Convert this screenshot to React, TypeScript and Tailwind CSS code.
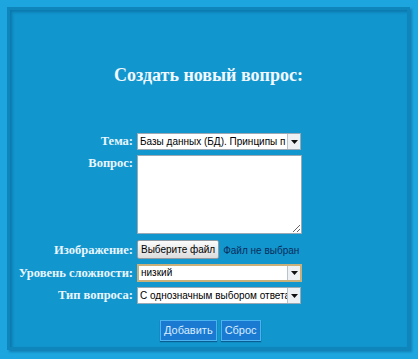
import React from "react"

const Arrow = () => (
  <div className="flex h-full w-[13px] items-center justify-center border-l border-[#b8c4cc] bg-[#eef1f4]">
    <svg width="7" height="4" viewBox="0 0 7 4">
      <path d="M0 0h7L3.5 4z" fill="#111" />
    </svg>
  </div>
)

const Select = ({ value, focused }: { value: string; focused?: boolean }) => (
  <div
    className={
      focused
        ? "flex h-[18px] w-[165px] items-center border-2 border-[#c9b07a] bg-white"
        : "flex h-[17px] w-[164px] items-center border border-[#9aa9b3] bg-white"
    }>
    <div className="min-w-0 flex-1 overflow-hidden whitespace-nowrap pl-[2px] text-[10px] leading-none text-black">
      {value}
    </div>
    <Arrow />
  </div>
)

const Label = ({ children }: { children: React.ReactNode }) => (
  <div className="pr-[4px] text-right font-['Liberation_Serif',serif] text-[12.5px] font-bold leading-none text-[#eaf6ff]">
    {children}
  </div>
)

export default function App() {
  return (
    <div className="h-[359px] w-[418px] bg-[#1ca5de] pb-[9px] pl-[7px] pr-[8px] pt-[7px] font-['Liberation_Sans',Arial,sans-serif]">
      <div className="flex h-full flex-col border-[3px] border-[#0e86bb] bg-[#1196cd] shadow-[inset_2px_2px_3px_rgba(0,60,110,0.35),2px_2px_2px_rgba(0,60,110,0.35)]">
        <h1 className="mt-[54px] text-center font-['Liberation_Serif',serif] text-[18px] font-bold leading-[22px] text-[#f2f8ff]">
          Создать новый вопрос:
        </h1>

        <div className="ml-[1px] mt-[47px] grid grid-cols-[126px_auto] items-center gap-y-[5px]">
          <Label>Тема:</Label>
          <Select value="Базы данных (БД). Принципы п" />

          <div className="self-start pt-[2px]">
            <Label>Вопрос:</Label>
          </div>
          <textarea className="h-[79px] w-[165px] resize border border-[#9aa9b3] bg-white outline-none" />

          <div className="pt-[2px]">
            <Label>Изображение:</Label>
          </div>
          <div className="flex items-center pt-[1px]">
            <div className="flex h-[19px] items-center rounded-[2px] border border-[#8f9aa3] bg-gradient-to-b from-[#fbfbfb] to-[#dcdcdc] px-[3px] text-[10px] leading-none text-black">
              Выберите файл
            </div>
            <span className="ml-[4px] mt-[3px] text-[10px] leading-none text-[#0b2c5c]">
              Файл не выбран
            </span>
          </div>

          <Label>Уровень сложности:</Label>
          <Select value="низкий" focused />

          <Label>Тип вопроса:</Label>
          <Select value="С однозначным выбором ответа" />
        </div>

        <div className="ml-[150px] mt-[16px] flex gap-[4px]">
          <button className="h-[21px] border border-[#4bb4f0] bg-[#1a7ad2] px-[3px] text-[11px] leading-none text-[#d9ecff] shadow-[0_1px_1px_rgba(0,40,90,0.5)]">
            Добавить
          </button>
          <button className="h-[21px] border border-[#4bb4f0] bg-[#1a7ad2] px-[3px] text-[11px] leading-none text-[#d9ecff] shadow-[0_1px_1px_rgba(0,40,90,0.5)]">
            Сброс
          </button>
        </div>
      </div>
    </div>
  )
}
